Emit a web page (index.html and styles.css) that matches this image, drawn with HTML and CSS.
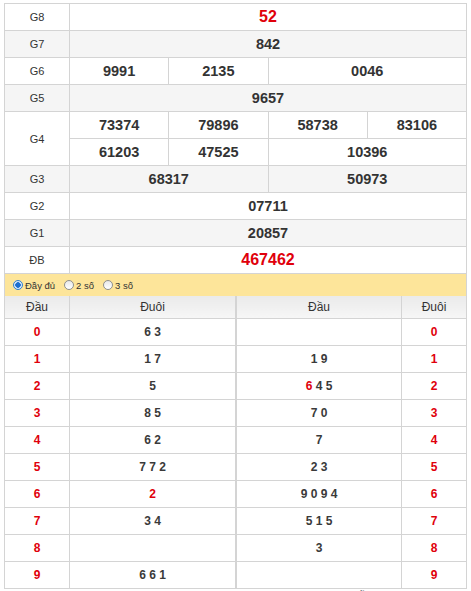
FILE: index.html
```html
<!DOCTYPE html>
<html lang="vi">
<head>
<meta charset="utf-8">
<link rel="stylesheet" href="styles.css">
</head>
<body>
<div class="wrap">
  <table class="kq">
    <colgroup><col class="c-lbl"><col><col><col><col></colgroup>
    <tr><td class="lbl">G8</td><td colspan="4" class="num red big">52</td></tr>
    <tr class="alt"><td class="lbl">G7</td><td colspan="4" class="num">842</td></tr>
    <tr><td class="lbl">G6</td><td class="num">9991</td><td class="num">2135</td><td colspan="2" class="num">0046</td></tr>
    <tr class="alt"><td class="lbl">G5</td><td colspan="4" class="num">9657</td></tr>
    <tr><td class="lbl" rowspan="2">G4</td><td class="num">73374</td><td class="num">79896</td><td class="num">58738</td><td class="num">83106</td></tr>
    <tr><td class="num">61203</td><td class="num">47525</td><td colspan="2" class="num">10396</td></tr>
    <tr class="alt"><td class="lbl">G3</td><td colspan="2" class="num">68317</td><td colspan="2" class="num">50973</td></tr>
    <tr><td class="lbl">G2</td><td colspan="4" class="num">07711</td></tr>
    <tr class="alt"><td class="lbl">G1</td><td colspan="4" class="num">20857</td></tr>
    <tr><td class="lbl">ĐB</td><td colspan="4" class="num red big">467462</td></tr>
  </table>

  <div class="opts">
    <label class="opt"><span class="radio on"></span>Đầy đủ</label>
    <label class="opt"><span class="radio"></span>2 số</label>
    <label class="opt"><span class="radio"></span>3 số</label>
  </div>

  <div class="loto">
    <table class="lt">
      <colgroup><col class="c-head"><col></colgroup>
      <tr class="hd"><th>Đầu</th><th>Đuôi</th></tr>
      <tr><td class="h">0</td><td class="d">6 3</td></tr>
      <tr><td class="h">1</td><td class="d">1 7</td></tr>
      <tr><td class="h">2</td><td class="d">5</td></tr>
      <tr><td class="h">3</td><td class="d">8 5</td></tr>
      <tr><td class="h">4</td><td class="d">6 2</td></tr>
      <tr><td class="h">5</td><td class="d">7 7 2</td></tr>
      <tr><td class="h">6</td><td class="d"><span class="r">2</span></td></tr>
      <tr><td class="h">7</td><td class="d">3 4</td></tr>
      <tr><td class="h">8</td><td class="d"></td></tr>
      <tr><td class="h">9</td><td class="d">6 6 1</td></tr>
    </table>
    <table class="lt rt">
      <colgroup><col><col class="c-head"></colgroup>
      <tr class="hd"><th>Đầu</th><th>Đuôi</th></tr>
      <tr><td class="d"></td><td class="h">0</td></tr>
      <tr><td class="d">1 9</td><td class="h">1</td></tr>
      <tr><td class="d"><span class="r">6</span> 4 5</td><td class="h">2</td></tr>
      <tr><td class="d">7 0</td><td class="h">3</td></tr>
      <tr><td class="d">7</td><td class="h">4</td></tr>
      <tr><td class="d">2 3</td><td class="h">5</td></tr>
      <tr><td class="d">9 0 9 4</td><td class="h">6</td></tr>
      <tr><td class="d">5 1 5</td><td class="h">7</td></tr>
      <tr><td class="d">3</td><td class="h">8</td></tr>
      <tr><td class="d"></td><td class="h">9</td></tr>
    </table>
  </div>
  <p class="more">Xem thêm kết quả xổ số hôm nay, thống kê lô tô và cầu đẹp miễn phí tại đây</p>
</div>
</body>
</html>
```

FILE: styles.css
```css
html, body {
  margin: 0;
  padding: 0;
  background: #fff;
}
body {
  font-family: "Liberation Sans", Arial, sans-serif;
  color: #333;
}
.wrap {
  width: 463px;
  margin: 3px 0 0 4px;
}
table {
  border-collapse: collapse;
  table-layout: fixed;
}
.kq {
  width: 463px;
}
.c-lbl { width: 65px; }
.kq td {
  border: 1px solid #d4d4d4;
  height: 26px;
  padding: 0;
  text-align: center;
  vertical-align: middle;
  line-height: 16px;
}
.kq tr.alt td {
  background: #f5f5f5;
}
.kq .lbl {
  font-size: 11px;
  color: #333;
}
.kq .num {
  font-size: 14.5px;
  font-weight: bold;
  color: #333;
}
.kq .num.big {
  font-size: 16px;
}
.kq .red {
  color: #e0000b;
}
.opts {
  height: 22px;
  background: #fde59a;
  border-left: 1px solid #d4d4d4;
  border-right: 1px solid #d4d4d4;
  display: flex;
  align-items: center;
  padding-left: 8px;
  box-sizing: border-box;
  font-size: 9.5px;
  color: #333;
}
.opt {
  display: flex;
  align-items: center;
  margin-right: 9px;
}
.radio {
  width: 8px;
  height: 8px;
  border: 1px solid #8e8f8f;
  border-radius: 50%;
  background: linear-gradient(#e8e8e8, #fff);
  margin-right: 2px;
  box-sizing: content-box;
}
.radio.on {
  border-color: #2f7fd0;
  background: radial-gradient(circle, #1d6fd0 0 2.5px, #d8e8fb 3px);
}
.loto {
  display: flex;
}
.lt {
  width: 232px;
}
.lt.rt {
  width: 231px;
}
.c-head { width: 65px; }
.lt th {
  height: 22px;
  border: 1px solid #d4d4d4;
  border-top: none;
  background: linear-gradient(#eaeaea, #f6f6f6);
  font-size: 12px;
  font-weight: normal;
  color: #333;
  padding: 0;
}
.lt td {
  height: 26px;
  border: 1px solid #d4d4d4;
  padding: 0;
  text-align: center;
  font-size: 12px;
  font-weight: bold;
  color: #3a3a3a;
}
.lt td.h {
  color: #e0000b;
}
.lt .r {
  color: #e0000b;
}
.more {
  margin: 1px 0 0 0;
  font-size: 12px;
  line-height: 16px;
  color: #333;
  padding-left: 20px;
}
```
